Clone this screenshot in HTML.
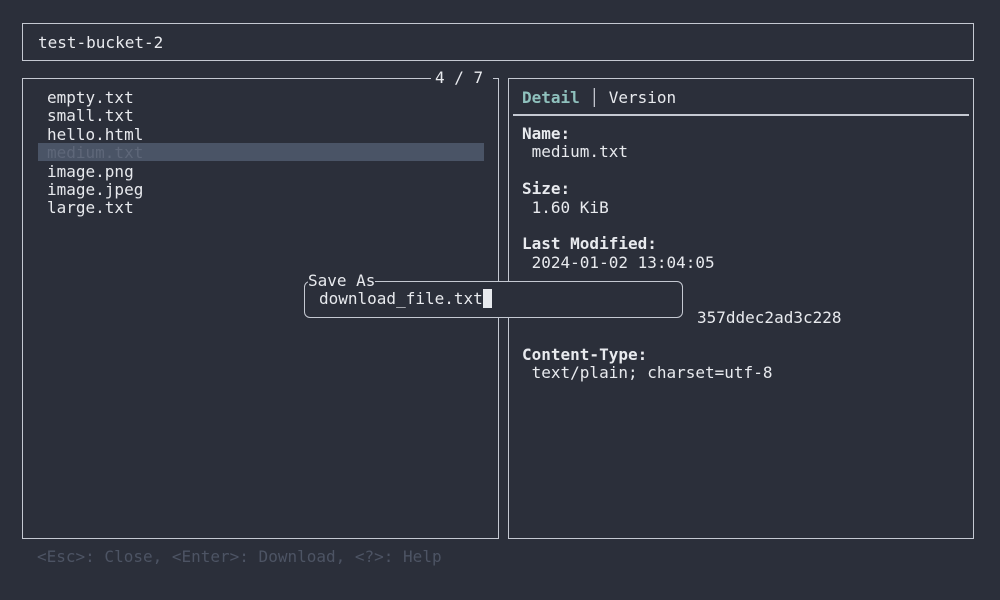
<!DOCTYPE html>
<html><head><style>
body{margin:0;width:1000px;height:600px;background:#2b2f3a;position:relative;overflow:hidden;font-family:"DejaVu Sans Mono","Liberation Mono",monospace;font-size:16px;color:#e8eaee}
.b{position:absolute;border:1.5px solid #c5c9d2;box-sizing:border-box}
.t{position:absolute;white-space:pre;line-height:18.4px}
.bold{font-weight:bold}
</style></head><body>
<div class="b" style="left:22px;top:23px;width:952px;height:38px"></div>
<div class="t" style="left:38px;top:34px">test-bucket-2</div>

<div class="b" style="left:22px;top:78px;width:477px;height:461px"></div>
<div class="t" style="left:431px;top:69px;background:#2b2f3a;padding:0 4px 0 4px;width:54px">4 / 7</div>
<div style="position:absolute;left:38px;top:143px;width:446px;height:18px;background:#4a5466"></div>
<div class="t" style="left:47px;top:89px">empty.txt
small.txt
hello.html
<span style="color:#5e6779">medium.txt</span>
image.png
image.jpeg
large.txt</div>

<div class="b" style="left:508px;top:78px;width:466px;height:461px"></div>
<div class="t" style="left:522px;top:89px"><span class="bold" style="color:#8fc1bd">Detail</span> <span style="color:#c5c9d2">│</span> Version</div>
<div style="position:absolute;left:513px;top:114px;width:456px;height:1.5px;background:#c5c9d2"></div>
<div class="t" style="left:522px;top:125px"><span class="bold">Name:</span>
 medium.txt

<span class="bold">Size:</span>
 1.60 KiB

<span class="bold">Last Modified:</span>
 2024-01-02 13:04:05




<span class="bold">Content-Type:</span>
 text/plain; charset=utf-8</div>
<div class="t" style="left:697px;top:309px">357ddec2ad3c228</div>

<div style="position:absolute;left:304px;top:281px;width:379px;height:37px;border:1.5px solid #c5c9d2;border-radius:6px;box-sizing:border-box;background:#2b2f3a"></div>
<div class="t" style="left:308px;top:272px;background:#2b2f3a">Save As</div>
<div class="t" style="left:319px;top:290px">download_file.txt<span style="background:#e8eaee">&nbsp;</span></div>

<div class="t" style="left:37px;top:548px;color:#4d5464">&lt;Esc&gt;: Close, &lt;Enter&gt;: Download, &lt;?&gt;: Help</div>
</body></html>
